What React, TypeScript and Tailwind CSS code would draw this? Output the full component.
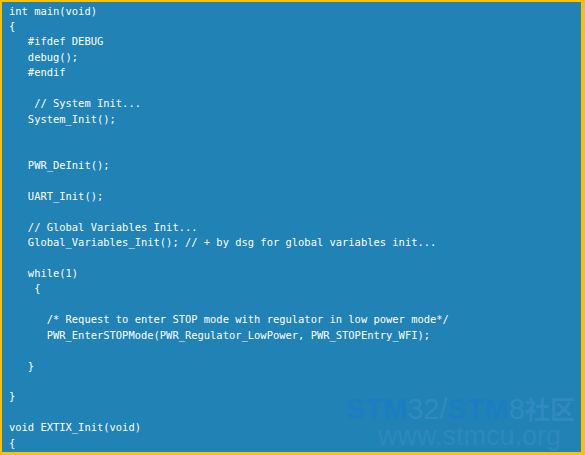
import React from "react";

const lines: string[] = [
  "int main(void)",
  "{",
  "   #ifdef DEBUG",
  "   debug();",
  "   #endif",
  "",
  "    // System Init...",
  "   System_Init();",
  "",
  "",
  "   PWR_DeInit();",
  "",
  "   UART_Init();",
  "",
  "   // Global Variables Init...",
  "   Global_Variables_Init(); // + by dsg for global variables init...",
  "",
  "   while(1)",
  "    {",
  "",
  "      /* Request to enter STOP mode with regulator in low power mode*/",
  "      PWR_EnterSTOPMode(PWR_Regulator_LowPower, PWR_STOPEntry_WFI);",
  "",
  "   }",
  "",
  "}",
  "",
  "void EXTIX_Init(void)",
  "{",
];

export default function App() {
  return (
    <div className="relative w-[585px] h-[455px] overflow-hidden bg-[#ffc000]">
      <div className="absolute left-[2px] top-[2px] right-[4px] bottom-[3px] bg-[#2082b5] overflow-hidden">
        <pre
          className="m-0 pl-[7px] pt-[1.5px] text-white whitespace-pre text-[10.45px] leading-[15.45px]"
          style={{ fontFamily: '"DejaVu Sans Mono", "Liberation Mono", monospace' }}
        >
          {lines.map((l, i) => (
            <div key={i} className="h-[15.45px]">
              {l === "" ? "\u00a0" : l}
            </div>
          ))}
        </pre>
        <div
          className="absolute left-[344px] top-[394px] flex flex-col items-start"
          style={{ fontFamily: '"Liberation Sans", Arial, "Noto Sans CJK SC", sans-serif' }}
        >
          <div className="flex items-baseline h-[26px] text-[29px] leading-[26px] whitespace-nowrap">
            <span className="inline-block leading-[26px] font-bold text-[#1c7ec2]">STM</span>
            <span className="inline-block leading-[26px] text-[#3089c0]">32/</span>
            <span className="inline-block leading-[26px] font-bold text-[#1c7ec2]">STM</span>
            <span className="inline-block leading-[26px] text-[#3089c0]">8</span>
            <span className="inline-block leading-[26px] font-bold text-[#3089c0] text-[25px]">社区</span>
          </div>
          <div className="ml-[32px] text-[27px] leading-[28px] text-[#2e88be] whitespace-nowrap">www.stmcu.org</div>
        </div>
      </div>
    </div>
  );
}
